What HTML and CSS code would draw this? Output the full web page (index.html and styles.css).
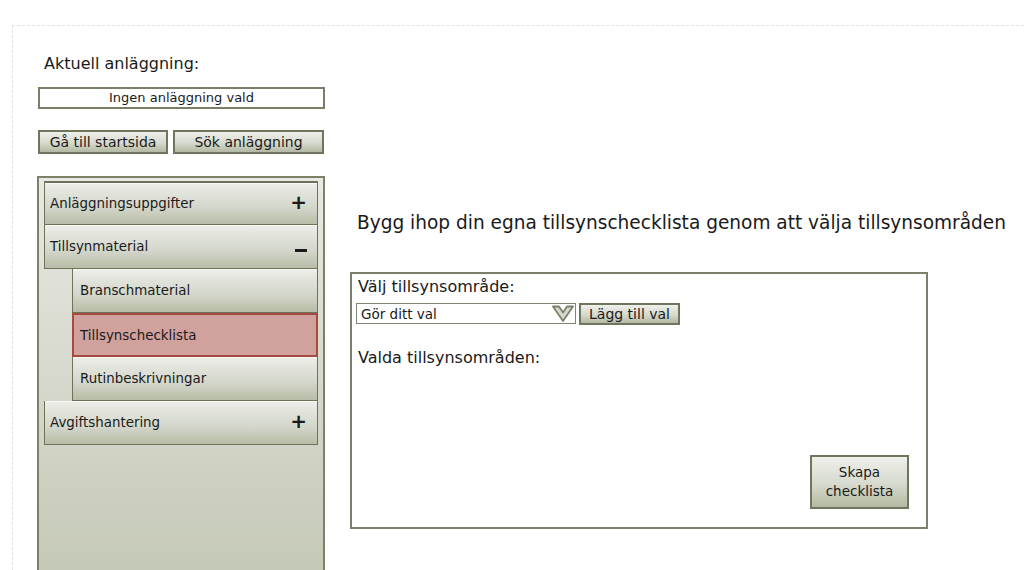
FILE: index.html
```html
<!DOCTYPE html>
<html lang="sv">
<head>
<meta charset="utf-8">
<title>Tillsynschecklista</title>
<link rel="stylesheet" href="styles.css">
</head>
<body>
<div class="frame">
  <aside class="left">
    <div class="label">Aktuell anläggning:</div>
    <div class="current">Ingen anläggning vald</div>
    <div class="btnrow">
      <button class="btn btn-start">Gå till startsida</button>
      <button class="btn btn-search">Sök anläggning</button>
    </div>
    <nav class="panel">
      <div class="item"><span>Anläggningsuppgifter</span><span class="plus">+</span></div>
      <div class="item"><span>Tillsynmaterial</span><span class="minus"></span></div>
      <div class="item sub"><span>Branschmaterial</span></div>
      <div class="item sub active"><span>Tillsynschecklista</span></div>
      <div class="item sub"><span>Rutinbeskrivningar</span></div>
      <div class="item"><span>Avgiftshantering</span><span class="plus">+</span></div>
    </nav>
  </aside>
  <main class="main">
    <h1 class="title">Bygg ihop din egna tillsynschecklista genom att välja tillsynsområden</h1>
    <section class="box">
      <div class="boxlabel">Välj tillsynsområde:</div>
      <div class="selrow">
        <div class="select">
          <span>Gör ditt val</span>
          <svg class="chev" width="22" height="18" viewBox="0 0 22 18"><polygon points="1,1.5 7,1.5 11,7.5 15,1.5 21,1.5 11,16" fill="#d5d9ca" stroke="#7a826a" stroke-width="1.8" stroke-linejoin="round"/></svg>
        </div>
        <button class="btn btn-add">Lägg till val</button>
      </div>
      <div class="boxlabel chosen">Valda tillsynsområden:</div>
      <button class="btn btn-create">Skapa<br>checklista</button>
    </section>
  </main>
</div>
</body>
</html>
```

FILE: styles.css
```css
html, body {
  margin: 0;
  padding: 0;
  background: #fff;
  overflow: hidden;
}
body {
  width: 1024px;
  height: 570px;
  font-family: "DejaVu Sans", Verdana, sans-serif;
  color: #1a1a1a;
}
.frame {
  margin: 25px 0 0 12px;
  height: 560px;
  border-top: 1px dashed #e2e2e2;
  border-left: 1px dashed #e2e2e2;
  display: flex;
  box-sizing: border-box;
}
.left {
  width: 288px;
  flex: none;
  margin-left: 24px;
  padding-top: 28px;
  display: flex;
  flex-direction: column;
}
.label {
  font-size: 16px;
  line-height: 20px;
  padding-left: 7px;
}
.current {
  margin-top: 13px;
  margin-left: 1px;
  height: 22px;
  box-sizing: border-box;
  border: 2px solid #7a7f69;
  background: #fff;
  font-size: 13px;
  line-height: 18px;
  text-align: center;
}
.btnrow {
  margin-top: 21px;
  display: flex;
  gap: 5px;
  margin-left: 1px;
}
.btn {
  font-family: "DejaVu Sans", Verdana, sans-serif;
  font-size: 14px;
  color: #1a1a1a;
  background: linear-gradient(#eef0ea, #d6d9cd 55%, #b3b9a2);
  border: 2px solid #6f765e;
  box-sizing: border-box;
  padding: 0;
  margin: 0;
  white-space: nowrap;
}
.btn-start { width: 130px; height: 24px; }
.btn-search { width: 151px; height: 24px; }
.panel {
  margin-top: 22px;
  height: 420px;
  box-sizing: border-box;
  border: 2px solid #7b8267;
  background: linear-gradient(#e8e9e3, #c4c8b6);
  padding: 3px 5px 0 5px;
  display: flex;
  flex-direction: column;
}
.item {
  height: 44px;
  box-sizing: border-box;
  border: 1px solid #6c735a;
  border-top-width: 0;
  background: linear-gradient(#eceee8, #d3d6ca 60%, #b7bda7);
  display: flex;
  align-items: center;
  justify-content: space-between;
  padding: 0 10px 0 5px;
  font-size: 13.4px;
  box-shadow: inset 0 1px 0 #f7f8f4;
  white-space: nowrap;
}
.item:first-child {
  border-top-width: 2px;
}
.item.sub {
  margin-left: 28px;
  padding-left: 7px;
}
.item.active {
  background: #d1a19e;
  border: 2px solid #a64a40;
  box-shadow: none;
  padding-left: 6px;
}
.plus {
  font-size: 20px;
  font-weight: bold;
  line-height: 1;
  margin-top: -4px;
}
.minus {
  display: block;
  width: 12px;
  height: 3px;
  background: #1a1a1a;
  margin-top: 8px;
}
.main {
  padding-top: 185px;
  margin-left: 25px;
  display: flex;
  flex-direction: column;
}
.title {
  margin: 0;
  padding-left: 7px;
  font-size: 18.55px;
  font-weight: normal;
  line-height: 24px;
  white-space: nowrap;
}
.box {
  margin-top: 37px;
  width: 578px;
  height: 257px;
  box-sizing: border-box;
  border: 2px solid #7b8068;
  background: #fff;
  padding: 4px 17px 18px 4px;
  display: flex;
  flex-direction: column;
}
.boxlabel {
  font-size: 16px;
  line-height: 18px;
  padding-left: 2px;
}
.selrow {
  margin-top: 7px;
  display: flex;
  gap: 3px;
}
.select {
  width: 220px;
  height: 21px;
  box-sizing: border-box;
  border: 1px solid #7f8570;
  display: flex;
  align-items: center;
  justify-content: space-between;
  padding: 0 1px 0 4px;
  font-size: 13.5px;
}
.chev { display: block; }
.btn-add { width: 101px; height: 22px; }
.chosen { margin-top: 24px; }
.btn-create {
  margin-top: auto;
  margin-left: auto;
  width: 99px;
  height: 54px;
  line-height: 19px;
  font-size: 13.5px;
}
```
